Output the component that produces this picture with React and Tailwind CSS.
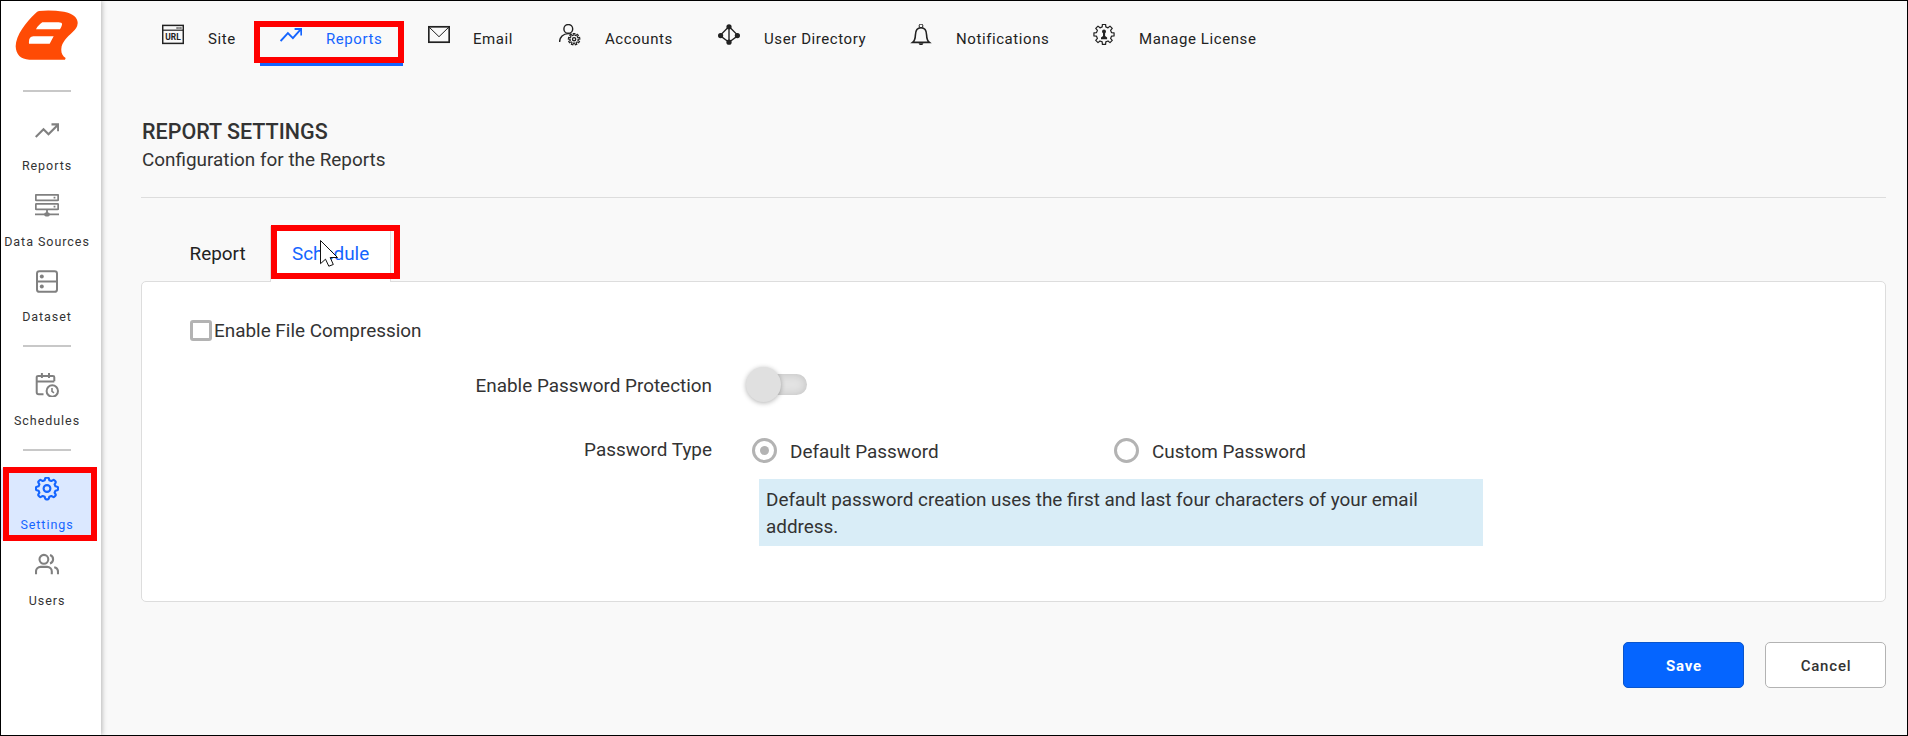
import React from "react";

function Svg({ children, size = 24, className = "", w = 2 }) {
  return (
    <svg width={size} height={size} viewBox={`0 0 ${size} ${size}`} fill="none" stroke="currentColor" strokeWidth={w} className={`shrink-0 ${className}`}>
      {children}
    </svg>
  );
}

function gear(cx, cy, inner, outer, teeth) {
  const pts = [];
  for (let i = 0; i < teeth; i++) {
    const a = (i * 2 * Math.PI) / teeth - Math.PI / 2;
    const s = (2 * Math.PI) / teeth;
    [[-0.3, inner], [-0.2, outer], [0.2, outer], [0.3, inner]].forEach(([f, r]) => {
      pts.push(`${(cx + r * Math.cos(a + f * s)).toFixed(2)},${(cy + r * Math.sin(a + f * s)).toFixed(2)}`);
    });
  }
  return pts.join(" ");
}

const side = {
  reports: (
    <Svg w={2.2}>
      <path d="M.7 19 8.5 11.2l5 5L23 6.7M16.5 6.4h6.7v6.8" />
    </Svg>
  ),
  sources: (
    <Svg w={1.8}>
      <rect x=".8" y=".8" width="22.4" height="5.6" rx=".6" />
      <rect x=".8" y="9.8" width="22.4" height="5.6" rx=".6" />
      <path d="M12 16v4M0 20.4h24" />
      <path d="M19.5 2.8v1.6M19.5 11.8v1.6" />
      <ellipse cx="12" cy="20.4" rx="2.8" ry="2.1" fill="currentColor" stroke="none" />
    </Svg>
  ),
  dataset: (
    <Svg w={2}>
      <rect x="2" y="1.2" width="20" height="20.6" rx="2.4" />
      <path d="M2 11.5h20" />
      <circle cx="6.8" cy="6.4" r="2" fill="currentColor" stroke="none" />
      <circle cx="6.8" cy="16.6" r="2" fill="currentColor" stroke="none" />
    </Svg>
  ),
  schedules: (
    <Svg w={2}>
      <path d="M8.5 21.2H3.7a2 2 0 0 1-2-2V4.3a1.4 1.4 0 0 1 1.4-1.4h14.8a1.4 1.4 0 0 1 1.4 1.4v4M1.7 8.6h17.6M6.9 0v5M14 0v5" />
      <circle cx="17.3" cy="18" r="5.7" />
      <path d="M17 15v3.3l2 1.5" strokeWidth="1.6" />
    </Svg>
  ),
  settings: (
    <Svg w={2.1}>
      <circle cx="12" cy="11.5" r="3.4" />
      <path
        strokeLinejoin="round"
        d="M9.7 3.2 10.2 1.4Q10.4.6 11.2.6h1.6q.8 0 1 .8l.5 1.8 2 .85 1.7-1q.7-.4 1.3.2l1.1 1.1q.6.6.2 1.3l-1 1.7.85 2 1.8.5q.8.2.8 1v1.3q0 .8-.8 1l-1.8.5-.85 2 1 1.7q.4.7-.2 1.3l-1.1 1.1q-.6.6-1.3.2l-1.7-1-2 .85-.5 1.8q-.2.8-1 .8h-1.6q-.8 0-1-.8l-.5-1.8-2-.85-1.7 1q-.7.4-1.3-.2l-1.1-1.1q-.6-.6-.2-1.3l1-1.7-.85-2-1.8-.5q-.8-.2-.8-1v-1.3q0-.8.8-1l1.8-.5.85-2-1-1.7q-.4-.7.2-1.3l1.1-1.1q.6-.6 1.3-.2l1.7 1z"
      />
    </Svg>
  ),
  users: (
    <Svg w={2.1}>
      <circle cx="8.9" cy="6.3" r="4.4" />
      <path d="M1 21.3v-2.8a4.6 4.6 0 0 1 4.6-4.6h6.6a4.6 4.6 0 0 1 4.6 4.6v2.8M15 2.1a4.4 4.4 0 0 1 0 8.4M19.2 14.2a4.6 4.6 0 0 1 3.8 4.5v2.6" />
    </Svg>
  ),
};

const top = {
  site: (
    <Svg size={22} w={1.5}>
      <rect x=".7" y="1.4" width="20.6" height="18" />
      <path d="M.7 6.2h20.6" strokeWidth="1.2" />
      <path d="M14.5 4h5" strokeDasharray="1.2 .7" />
      <text x="11" y="15.8" textAnchor="middle" fontSize="8.4" fontWeight="700" fill="currentColor" stroke="none" fontFamily="Roboto" textLength="15.4">URL</text>
    </Svg>
  ),
  reports: (
    <Svg size={22} w={1.9}>
      <path d="m.6 17 7.3-7.8 5 5 8-9M14.6 5h6.7v6.4" />
    </Svg>
  ),
  email: (
    <Svg size={22} w={1.7} className="-mr-px translate-x-px">
      <rect x=".8" y="2.8" width="20.400" height="15.400" />
      <path d="m1.2 3.2 9.800 9.500 9.800-9.500" strokeWidth="1" />
    </Svg>
  ),
  accounts: (
    <Svg size={22} w={1.4}>
      <circle cx="9.3" cy="4.9" r="4.4" />
      <path d="M.6 18c0-4.5 3.6-8.4 8.6-8.4 1.2 0 2 .1 3 .6" />
      <polygon points={gear(15.1, 15.2, 4, 5.8, 9)} strokeWidth="1.1" />
      <circle cx="15.1" cy="15.2" r="1.6" />
    </Svg>
  ),
  directory: (
    <Svg size={22} w={1.4}>
      <path d="M11 2.6 20 11.6 11 18.2 2 11.6ZM11 2.6v15.6" />
      <g fill="currentColor" stroke="none">
        <circle cx="11" cy="2.8" r="2.6" />
        <circle cx="2.6" cy="11.6" r="2.6" />
        <circle cx="19.4" cy="11.6" r="2.6" />
        <circle cx="11" cy="18.2" r="2.6" />
      </g>
    </Svg>
  ),
  bell: (
    <Svg size={22} w={1.6} className="-ml-px mr-px">
      <circle cx="11" cy="1.9" r="1.9" strokeWidth="1" />
      <path d="M2.6 18.4c2.6-2 2.7-4 2.8-7.4C5.5 6.5 7.5 3.8 11 3.8s5.5 2.7 5.6 7.2c.1 3.4.2 5.4 2.8 7.4Z" />
      <path d="M8.6 19.2c.3 2.5 4.5 2.5 4.8 0Z" fill="currentColor" stroke="none" />
    </Svg>
  ),
  license: (
    <Svg size={22} w={1.2} className="-ml-px mr-px">
      <polygon points={gear(11, 10.4, 7.7, 10.2, 8)} strokeLinejoin="round" />
      <circle cx="11" cy="7.6" r="2" fill="currentColor" stroke="none" />
      <path d="M10 8.5h2.1v3.5l2 1.5v1.7H8v-1.7l2-1.5Z" fill="currentColor" stroke="none" />
    </Svg>
  ),
};

function SideItem({ icon, label, active, labelClass = "" }) {
  return (
    <div className={`relative flex h-[76px] w-full flex-col items-center gap-4 pt-[9px] ${active ? "text-[#1565ff]" : "text-[#808080]"}`}>
      {active && <div className="absolute -top-px left-0 h-[74px] w-[94px] rounded bg-[#dbe8ff]" />}
      <div className="relative">{icon}</div>
      <span className={`relative whitespace-nowrap text-[12.5px] leading-4 tracking-[0.95px] ${active ? "text-[#1565ff]" : "text-[#333333]"} ${labelClass}`}>{label}</span>
      {active && <div className="absolute -top-px left-[2px] h-[74px] w-[94px] border-[6px] border-[#ff0000]" />}
    </div>
  );
}

const Divider = ({ className }) => <div className={`h-[2px] w-12 shrink-0 bg-[#c8c8c8] ${className}`} />;

function NavItem({ icon, label, width, active, gap = "gap-6" }) {
  return (
    <div className={`relative flex shrink-0 pl-5 pt-[23px] ${gap} ${width} ${active ? "text-[#1565ff]" : "text-[#222222]"}`}>
      {icon}
      <span className="mt-1 whitespace-nowrap text-[15px] leading-[22px] tracking-[0.58px]">{label}</span>
      {active && (
        <>
          <div className="absolute bottom-0 left-0 h-[3px] w-[143px] bg-[#1565ff]" />
          <div className="absolute -left-[6px] top-5 h-[42px] w-[150px] border-[6px] border-[#ff0000]" />
        </>
      )}
    </div>
  );
}

function Sidebar() {
  return (
    <aside className="relative z-10 flex w-[100px] shrink-0 flex-col items-center bg-white pr-2 shadow-[1px_0_5px_rgba(0,0,0,0.28)]">
      <svg width="64" height="51" viewBox="45 31 192 153" className="mt-[9px] shrink-0">
        <path
          fill="#ff4b05"
          fillRule="evenodd"
          d="M117 34Q150 30 192 36C220 41 234 55 233 71C232 83 227 89 218 97C202 112 185 128 184 147C183 160 187 168 197 175L195 180H88C62 179 48 165 47 140C47 107 79 66 105 42Q112 35 117 34ZM127 68C121 73 112 79 108 89H180Q184 83 186 75Q187 68 176 68ZM100 110Q85 111 87 132H149L161 110Z"
        />
      </svg>
      <Divider className="mt-[29px]" />
      <div className="h-[17px] shrink-0" />
      <SideItem icon={side.reports} label="Reports" />
      <SideItem icon={side.sources} label="Data Sources" />
      <SideItem icon={side.dataset} label="Dataset" labelClass="-mt-px" />
      <Divider className="mb-[17px] mt-2" />
      <SideItem icon={side.schedules} label="Schedules" />
      <Divider className="mb-[17px] mt-[9px]" />
      <SideItem icon={side.settings} label="Settings" active />
      <SideItem icon={side.users} label="Users" />
    </aside>
  );
}

export default function App() {
  return (
    <div className="flex h-[736px] w-[1908px] overflow-hidden border border-black bg-[#f9f9f9] font-['Roboto',sans-serif] text-[18.9px] leading-[27px] text-[#333333]">
      <Sidebar />
      <main className="flex min-w-0 flex-1 flex-col pl-10 pr-[21px]">
        <nav className="flex h-[65px] shrink-0 pl-px">
          <NavItem icon={top.site} label="Site" width="w-[118px]" />
          <NavItem icon={top.reports} label="Reports" width="w-[147px]" active />
          <NavItem icon={top.email} label="Email" width="w-[132px]" gap="gap-[25px]" />
          <NavItem icon={top.accounts} label="Accounts" width="w-[159px]" />
          <NavItem icon={top.directory} label="User Directory" width="w-[193px]" />
          <NavItem icon={top.bell} label="Notifications" width="w-[183px]" gap="gap-[23px]" />
          <NavItem icon={top.license} label="Manage License" width="w-[204px]" gap="gap-[23px]" />
        </nav>

        <header className="mt-[53px] h-[79px] shrink-0 border-b border-[#dddddd] pl-px">
          <h1 className="text-[21.5px] font-medium leading-[26px]">REPORT SETTINGS</h1>
          <p className="mt-px">Configuration for the Reports</p>
        </header>

        <div className="relative z-[1] mt-7 flex h-14 shrink-0">
          <div className="w-[129px] pl-[48.5px] pt-[14px] text-[#222222]">Report</div>
          <div className="relative w-[121px] border-x border-[#dddddd] bg-white pl-[21px] pt-[14px] text-[#1565ff]">
            Schedule
            <div className="absolute -top-px left-0 h-[54px] w-[129px] border-[6px] border-[#ff0000]" />
            <svg className="absolute left-[48px] top-[13px]" width="20" height="29" viewBox="-1 -1 20 29">
              <path d="M.5.5V23.7L5.5 19.2 8.8 26.2 13.3 24.5 10.2 17.5H17.5Z" fill="#fff" stroke="#111" strokeWidth="1" />
            </svg>
          </div>
        </div>

        <section className="-mt-px flex h-[321px] shrink-0 flex-col rounded-[5px] border border-[#dddddd] bg-white">
          <label className="mt-[35px] flex h-[27px] items-center gap-[2px] pl-12">
            <span className="h-[21px] w-[22px] rounded-[3px] border-[3px] border-[#b3b3b3] bg-white" />
            Enable File Compression
          </label>

          <div className="mt-7 flex h-[27px]">
            <span className="w-[570px] text-right">Enable Password Protection</span>
            <span className="relative -mt-[5px] ml-[34px] h-9 w-[61px]">
              <span className="absolute right-0 top-[7px] h-[21px] w-[50px] rounded-full bg-[#e3e3e3] shadow-[inset_0_0_10px_rgba(0,0,0,0.15)]" />
              <span className="absolute left-0 top-0 size-[35px] rounded-full bg-[#e0e0e0] shadow-[0_1px_5px_rgba(0,0,0,0.3)]" />
            </span>
          </div>

          <div className="mt-[37px] flex">
            <span className="w-[570px] text-right">Password Type</span>
            <div className="ml-10 mt-[2px]">
              <div className="flex h-[27px]">
                <label className="flex w-[362px] items-center gap-[13px]">
                  <span className="-mt-[2px] flex size-[25px] items-center justify-center rounded-full border-[3px] border-[#b3b3b3]">
                    <span className="size-[9px] rounded-full bg-[#b3b3b3]" />
                  </span>
                  Default Password
                </label>
                <label className="flex items-center gap-[13px]">
                  <span className="-mt-[2px] size-[25px] rounded-full border-[3px] border-[#b3b3b3]" />
                  Custom Password
                </label>
              </div>
              <p className="ml-[7px] mt-[14px] h-[67px] w-[724px] bg-[#d9edf7] pl-[7px] pr-12 pt-[7px]">
                Default password creation uses the first and last four characters of your email address.
              </p>
            </div>
          </div>
        </section>

        <div className="mt-10 flex justify-end gap-[21px] text-[15px] tracking-[0.8px]">
          <button className="h-[46px] w-[121px] rounded-[5px] border border-[#0a55cc] bg-[#0565ff] pl-px pt-[2px] font-bold text-white">Save</button>
          <button className="h-[46px] w-[121px] rounded-[5px] border border-[#b3b3b3] bg-white pl-px pt-[2px] font-medium">Cancel</button>
        </div>
      </main>
    </div>
  );
}
